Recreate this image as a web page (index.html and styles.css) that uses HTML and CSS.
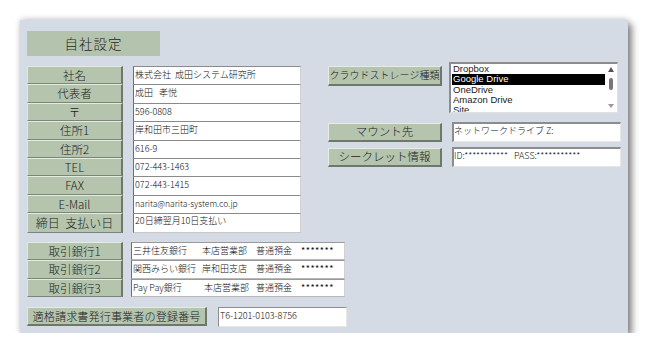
FILE: index.html
```html
<!DOCTYPE html>
<html lang="ja">
<head>
<meta charset="utf-8">
<title>自社設定</title>
<link rel="stylesheet" href="styles.css">
</head>
<body>
<div class="panel">
  <div class="title">自社設定</div>
  <div class="main">
    <div class="form">
      <div class="lbl">社名</div><div class="fld">株式会社&nbsp;&nbsp;成田システム研究所</div>
      <div class="lbl">代表者</div><div class="fld">成田&nbsp;&nbsp;&nbsp;孝悦</div>
      <div class="lbl">〒</div><div class="fld">596-0808</div>
      <div class="lbl">住所1</div><div class="fld">岸和田市三田町</div>
      <div class="lbl">住所2</div><div class="fld">616-9</div>
      <div class="lbl">TEL</div><div class="fld">072-443-1463</div>
      <div class="lbl">FAX</div><div class="fld">072-443-1415</div>
      <div class="lbl">E-Mail</div><div class="fld small">narita@narita-system.co.jp</div>
      <div class="lbl last">締日&nbsp;&nbsp;支払い日</div><div class="fld last">20日締翌月10日支払い</div>
    </div>
    <div class="right">
      <div class="rrow first">
        <div class="btn cloud">クラウドストレージ種類</div>
        <div class="listbox">
          <ul class="items">
            <li>Dropbox</li>
            <li class="sel">Google Drive</li>
            <li>OneDrive</li>
            <li>Amazon Drive</li>
            <li>Site</li>
          </ul>
          <div class="scroll">
            <span class="arrow up"></span>
            <span class="thumb"></span>
            <span class="arrow down"></span>
          </div>
        </div>
      </div>
      <div class="rrow mount">
        <div class="btn">マウント先</div>
        <div class="rfld">ネットワークドライブ Z:</div>
      </div>
      <div class="rrow secret">
        <div class="btn">シークレット情報</div>
        <div class="rfld">ID:***********&nbsp;&nbsp;&nbsp;PASS:***********</div>
      </div>
    </div>
  </div>
  <div class="banks">
    <div class="lbl">取引銀行1</div>
    <div class="fld bank"><span class="b1">三井住友銀行</span><span class="b2">本店営業部</span><span class="b3">普通預金</span><span class="b4">*******</span></div>
    <div class="lbl">取引銀行2</div>
    <div class="fld bank"><span class="b1">関西みらい銀行</span><span class="b2">岸和田支店</span><span class="b3">普通預金</span><span class="b4">*******</span></div>
    <div class="lbl">取引銀行3</div>
    <div class="fld bank"><span class="b1">Pay Pay銀行</span><span class="b2 shift">本店営業部</span><span class="b3">普通預金</span><span class="b4">*******</span></div>
  </div>
  <div class="reg">
    <div class="lbl reglbl">適格請求書発行事業者の登録番号</div>
    <div class="regfld">T6-1201-0103-8756</div>
  </div>
</div>
</body>
</html>
```

FILE: styles.css
```css
* { box-sizing: border-box; }
html, body { margin: 0; padding: 0; background: #ffffff; }
body {
  font-family: "Noto Sans CJK JP", "Liberation Sans", sans-serif;
  font-weight: 300;
  color: #000;
  padding: 20px 0 0 20px;
}
.panel {
  width: 608px;
  height: 313px;
  background: #d5dbe5;
  padding: 11px 0 0 7px;
  box-shadow: 4px 4px 7px rgba(0,0,0,0.45), 0 -1px 6px rgba(0,0,0,0.18);
}
.title {
  width: 133px;
  height: 25px;
  background: #b4c3ad;
  font-size: 13.5px;
  line-height: 25px;
  text-align: center;
  letter-spacing: 1px;
  color: #262626;
}
.main {
  display: flex;
  align-items: flex-start;
  margin-top: 10px;
}
.form {
  display: grid;
  grid-template-columns: 96px 168px;
  grid-template-rows: repeat(8, 18.4px) 19.5px;
  column-gap: 10px;
}
.lbl {
  background: #b4c4ad;
  border-top: 1px solid #e4ebe1;
  border-left: 1px solid #dfe6dc;
  border-bottom: 1px solid #7d857a;
  border-right: 2px solid #6f776c;
  font-size: 11.5px;
  line-height: 16px;
  text-align: center;
  color: #222;
  white-space: nowrap;
}
.fld {
  background: #fff;
  border-top: 1px solid #8a8a8a;
  border-left: 1px solid #6e6e6e;
  border-right: 1px solid #d0d0d0;
  font-size: 9px;
  line-height: 15px;
  padding-left: 1px;
  white-space: pre;
  overflow: hidden;
  color: #111;
}
.fld.small { font-size: 8.5px; }
.form .fld.last { border-bottom: 1px solid #c8c8c8; line-height: 14px; }
.form .lbl.last { line-height: 17px; font-size: 12px; }

.right {
  margin-left: 27px;
  margin-top: -4px;
}
.rrow { display: flex; align-items: flex-start; }
.btn {
  width: 114px;
  background: #b4c4ad;
  border-top: 1px solid #e6ece3;
  border-left: 1px solid #e6ece3;
  border-bottom: 2px solid #6f776c;
  border-right: 2px solid #6f776c;
  font-size: 11.5px;
  text-align: center;
  color: #222;
  white-space: nowrap;
}
.btn.cloud {
  height: 20px;
  margin-top: 4px;
  font-size: 10px;
  line-height: 16px;
}
.listbox {
  width: 169px;
  height: 51px;
  margin-left: 7px;
  background: #fff;
  border-top: 2px solid #8c8c8c;
  border-left: 2px solid #8c8c8c;
  border-right: 1px solid #e0e0e0;
  border-bottom: 1px solid #e0e0e0;
  display: flex;
  overflow: hidden;
}
.items {
  list-style: none;
  margin: 0;
  padding: 0 0 0 1px;
  flex: 1;
  font-family: "Liberation Sans", "Noto Sans CJK JP", sans-serif;
  font-weight: 400;
  font-size: 9.5px;
  line-height: 10.3px;
  color: #222;
}
.items li { padding-left: 1px; white-space: nowrap; }
.items li.sel { background: #000; color: #fff; }
.scroll {
  width: 12px;
  position: relative;
  background: #fff;
}
.arrow {
  position: absolute;
  left: 3px;
  width: 0; height: 0;
  border-left: 3.5px solid transparent;
  border-right: 3.5px solid transparent;
}
.arrow.up { top: 3px; border-bottom: 5px solid #555; }
.arrow.down { bottom: 4px; border-top: 4px solid #9a9a9a; }
.thumb {
  position: absolute;
  left: 4px;
  top: 14px;
  width: 4px;
  height: 12px;
  border-radius: 2px;
  background: #777;
}
.rrow.mount { margin-top: 9px; }
.rrow.secret { margin-top: 5px; }
.mount .btn, .secret .btn { height: 19px; line-height: 15px; margin-top: 1px; }
.rfld {
  width: 169px;
  height: 20px;
  margin-left: 10px;
  background: #fff;
  border-top: 2px solid #8c8c8c;
  border-left: 2px solid #8c8c8c;
  border-right: 1px solid #e6e6e6;
  border-bottom: 1px solid #e6e6e6;
  font-size: 9px;
  line-height: 13px;
  white-space: nowrap;
  overflow: hidden;
  color: #111;
}

.banks {
  display: grid;
  grid-template-columns: 96px 214px;
  grid-template-rows: repeat(3, 18.6px);
  column-gap: 8px;
  margin-top: 9px;
}
.banks .lbl { font-size: 11.5px; line-height: 16.5px; }
.fld.bank {
  display: flex;
  font-size: 9px;
  line-height: 15px;
  border-bottom: 1px solid #b8b8b8;
  border-top: 1px solid #9a9a9a;
}
.bank .b1 { width: 69px; }
.bank .b2 { width: 54px; }
.bank .b2.shift { padding-left: 2px; }
.bank .b3 { width: 45px; }
.bank .b4 { letter-spacing: 0.5px; font-weight: 400; }
.reg {
  display: flex;
  align-items: flex-start;
  margin-top: 10px;
}
.reglbl {
  width: 180px;
  height: 19px;
  font-size: 11.2px;
  line-height: 16px;
  border-bottom: 2px solid #6f776c;
}
.regfld {
  width: 129px;
  height: 20px;
  margin-left: 11px;
  background: #fff;
  border-top: 1px solid #8c8c8c;
  border-left: 1px solid #8c8c8c;
  border-right: 1px solid #e6e6e6;
  border-bottom: 1px solid #e6e6e6;
  font-size: 9px;
  line-height: 15px;
  padding-left: 1px;
  color: #111;
}
```
